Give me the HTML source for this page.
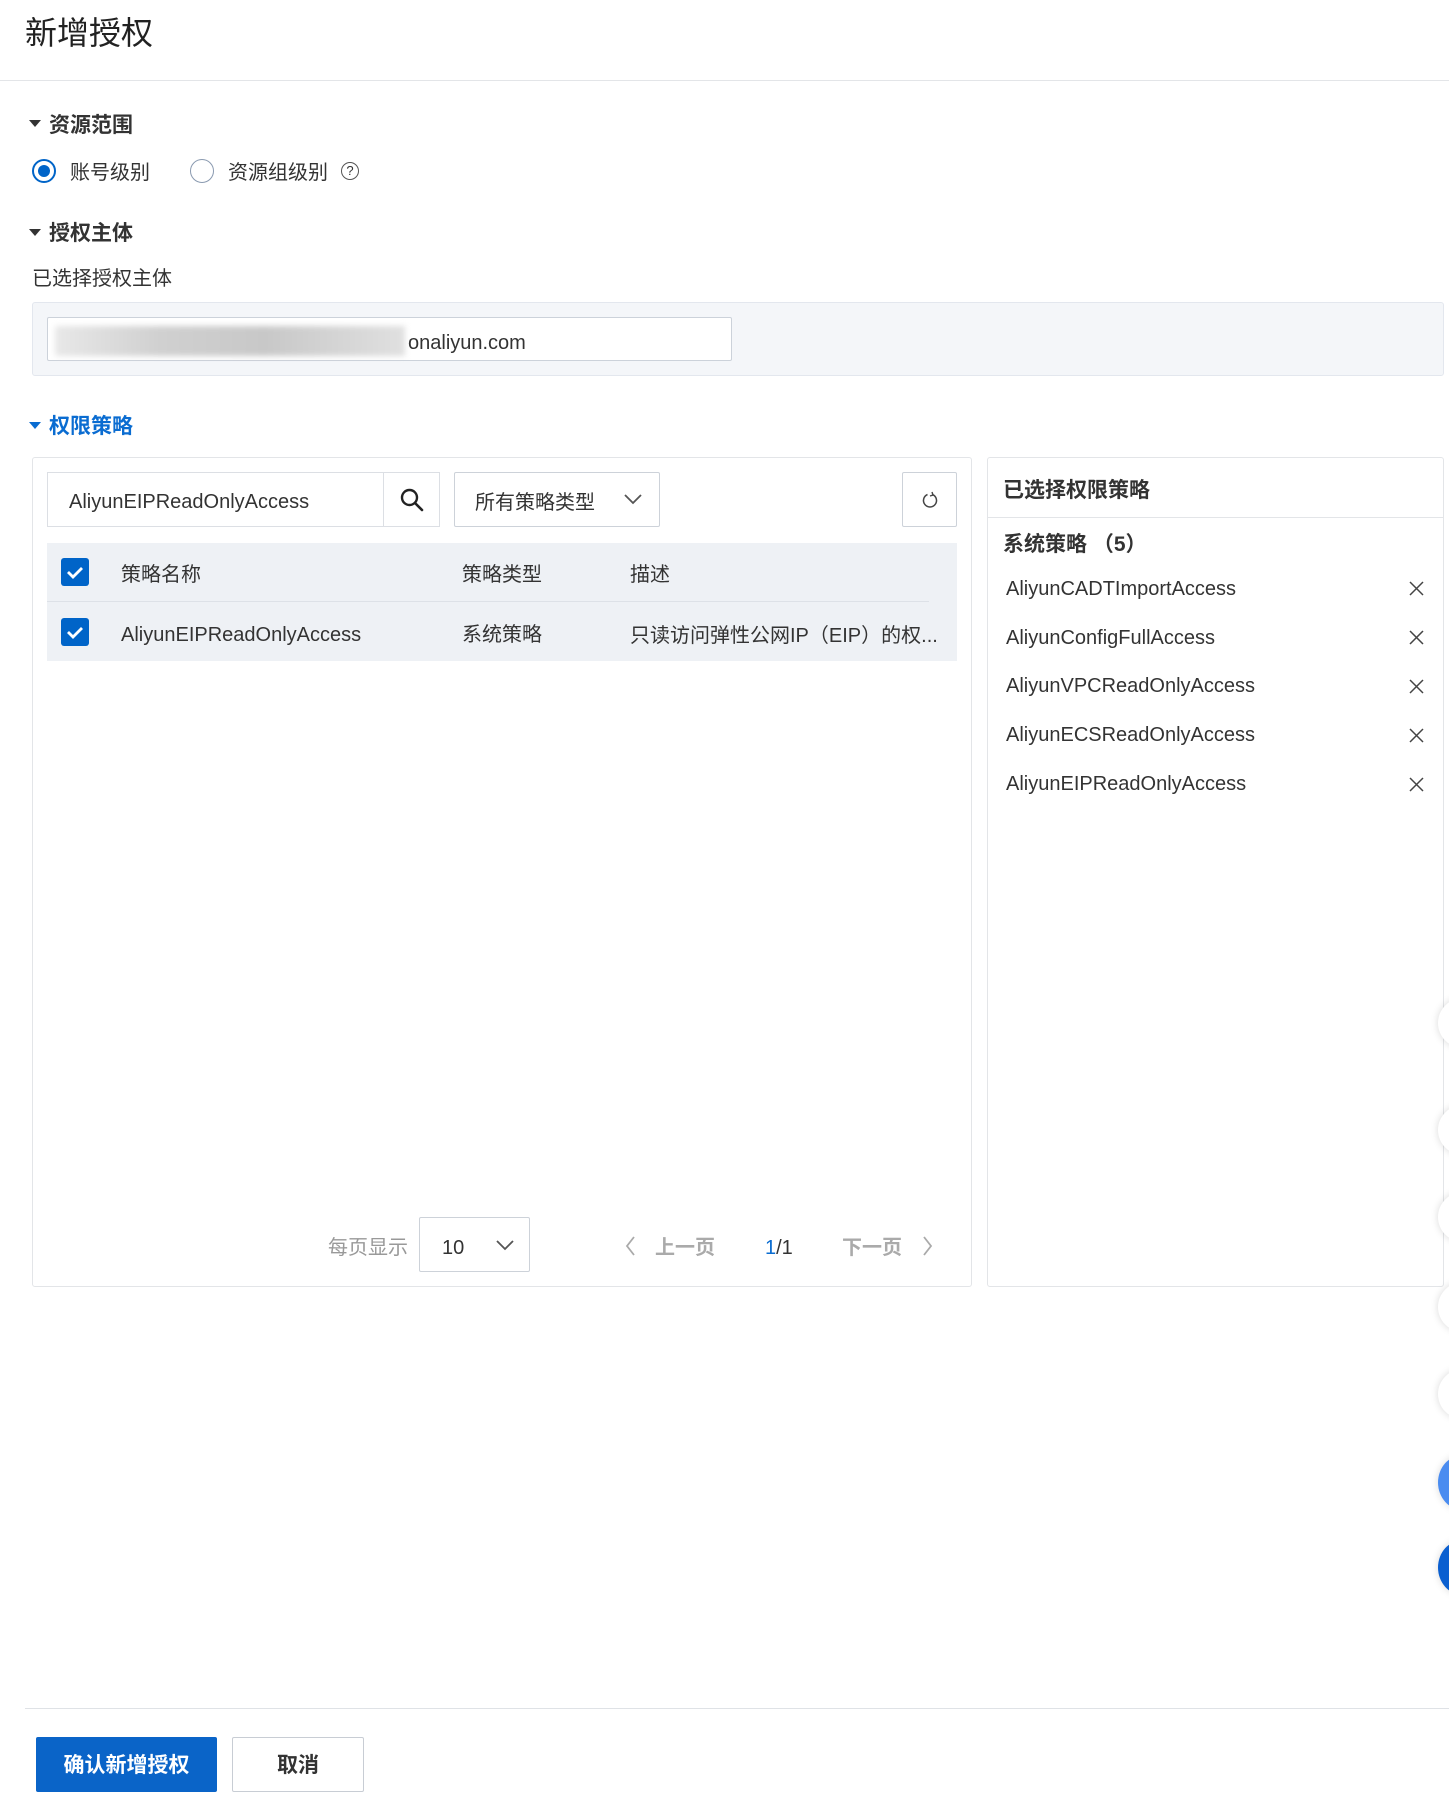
<!DOCTYPE html>
<html><head><meta charset="utf-8"><style>
*{box-sizing:border-box;margin:0;padding:0}
body{width:1449px;height:1802px;background:#fff;font-family:"Liberation Sans","Noto Sans CJK SC",sans-serif;color:#333;position:relative;overflow:hidden;font-size:20px}
.a{position:absolute;white-space:nowrap}
.tri{position:absolute;width:0;height:0;border-left:6px solid transparent;border-right:6px solid transparent;border-top:7px solid #333}
.h{font-weight:bold;font-size:21px;color:#333}
.radio{position:absolute;width:24px;height:24px;border-radius:50%;border:1.5px solid #8a9ab0;background:#fff}
.cb{position:absolute;width:28px;height:28px;background:#0064c8;border-radius:3px}
.circ{position:absolute;border-radius:50%;background:#fff;box-shadow:0 0 8px rgba(0,0,0,.15)}
</style></head><body>
<div class="a" style="left:25px;top:8px;font-size:32px;color:#222">新增授权</div>
<div class="a" style="left:0;top:80px;width:1449px;height:1px;background:#e3e5e8"></div>

<div class="tri" style="left:29px;top:120px"></div>
<div class="a h" style="left:49px;top:109px">资源范围</div>
<div class="radio" style="left:32px;top:159px;border:2px solid #0064c8"><div style="position:absolute;left:4px;top:4px;width:12px;height:12px;border-radius:50%;background:#0064c8"></div></div>
<div class="a" style="left:70px;top:156px">账号级别</div>
<div class="radio" style="left:190px;top:159px"></div>
<div class="a" style="left:228px;top:156px">资源组级别</div>
<div class="a" style="left:341px;top:162px;width:18px;height:18px;border:1.5px solid #555;border-radius:50%;font-size:13px;text-align:center;line-height:15px">?</div>

<div class="tri" style="left:29px;top:229px"></div>
<div class="a h" style="left:49px;top:217px">授权主体</div>
<div class="a" style="left:32px;top:262px">已选择授权主体</div>
<div class="a" style="left:32px;top:302px;width:1412px;height:74px;background:#f4f6f9;border:1px solid #e3e7ee;border-radius:3px"></div>
<div class="a" style="left:47px;top:317px;width:685px;height:44px;background:#fff;border:1px solid #ccd2da;border-radius:2px"></div>
<div class="a" style="left:55px;top:326px;width:350px;height:30px;background:linear-gradient(90deg,#e8e8e8,#d0d0d0 30%,#c8c8c8 60%,#e0e0e0);filter:blur(3px)"></div>
<div class="a" style="left:408px;top:332px">onaliyun.com</div>

<div class="tri" style="left:29px;top:422px;border-top-color:#0a6cd1"></div>
<div class="a h" style="left:49px;top:410px;color:#0a6cd1">权限策略</div>

<div class="a" style="left:32px;top:457px;width:940px;height:830px;border:1px solid #e3e5e8;border-radius:3px"></div>
<div class="a" style="left:987px;top:457px;width:457px;height:830px;border:1px solid #e3e5e8;border-radius:3px"></div>

<div class="a" style="left:47px;top:472px;width:393px;height:55px;border:1px solid #dcdfe4"></div>
<div class="a" style="left:383px;top:472px;width:1px;height:55px;background:#dcdfe4"></div>
<div class="a" style="left:69px;top:491px">AliyunEIPReadOnlyAccess</div>
<svg class="a" style="left:399px;top:487px" width="26" height="26" viewBox="0 0 26 26"><circle cx="10.5" cy="10.5" r="7.5" fill="none" stroke="#222" stroke-width="2.4"/><path d="M16 16l7 7" stroke="#222" stroke-width="2.6" stroke-linecap="round"/></svg>
<div class="a" style="left:454px;top:472px;width:206px;height:55px;border:1px solid #cdd2d9;border-radius:2px"></div>
<div class="a" style="left:475px;top:486px">所有策略类型</div>
<svg class="a" style="left:623px;top:492px" width="20" height="14"><path d="M2 3l8 8 8-8" fill="none" stroke="#555" stroke-width="1.8"/></svg>
<div class="a" style="left:902px;top:472px;width:55px;height:55px;border:1px solid #cdd2d9;border-radius:2px"></div>
<svg class="a" style="left:920px;top:490px" width="20" height="20"><path d="M12.5 4.5A6.5 6.5 0 1 1 7.5 4.5" fill="none" stroke="#444" stroke-width="1.5"/><path d="M12 2l1 3-3 1" fill="none" stroke="#444" stroke-width="1.4"/></svg>

<div class="a" style="left:47px;top:543px;width:910px;height:118px;background:#eef1f5"></div>
<div class="a" style="left:47px;top:601px;width:882px;height:1px;background:#dde1e7"></div>
<div class="cb" style="left:61px;top:558px"><svg width="28" height="28"><path d="M7 14l5 5 9-9" fill="none" stroke="#fff" stroke-width="2.8"/></svg></div>
<div class="cb" style="left:61px;top:618px"><svg width="28" height="28"><path d="M7 14l5 5 9-9" fill="none" stroke="#fff" stroke-width="2.8"/></svg></div>
<div class="a" style="left:121px;top:558px">策略名称</div>
<div class="a" style="left:462px;top:558px">策略类型</div>
<div class="a" style="left:630px;top:558px">描述</div>
<div class="a" style="left:121px;top:624px">AliyunEIPReadOnlyAccess</div>
<div class="a" style="left:462px;top:618px">系统策略</div>
<div class="a" style="left:630px;top:619px">只读访问弹性公网IP（EIP）的权...</div>

<div class="a" style="left:328px;top:1231px;color:#999">每页显示</div>
<div class="a" style="left:419px;top:1217px;width:111px;height:55px;border:1px solid #cdd2d9;border-radius:2px"></div>
<div class="a" style="left:442px;top:1237px">10</div>
<svg class="a" style="left:495px;top:1238px" width="20" height="14"><path d="M2 3l8 8 8-8" fill="none" stroke="#555" stroke-width="1.8"/></svg>
<svg class="a" style="left:624px;top:1235px" width="12" height="22"><path d="M10 2L3 11l7 9" fill="none" stroke="#aaa" stroke-width="1.8"/></svg>
<div class="a" style="left:655px;top:1231px;color:#aaa;font-weight:bold">上一页</div>
<div class="a" style="left:765px;top:1237px"><span style="color:#0a6cd1">1</span>/1</div>
<div class="a" style="left:842px;top:1231px;color:#aaa;font-weight:bold">下一页</div>
<svg class="a" style="left:922px;top:1235px" width="12" height="22"><path d="M2 2l7 9-7 9" fill="none" stroke="#aaa" stroke-width="1.8"/></svg>

<div class="a" style="left:1003px;top:474px;font-weight:bold;font-size:21px">已选择权限策略</div>
<div class="a" style="left:987px;top:517px;width:457px;height:1px;background:#e3e5e8"></div>
<div class="a" style="left:1003px;top:528px;font-weight:bold;font-size:21px">系统策略 （5）</div>
<div class="a" style="left:1006px;top:578px">AliyunCADTImportAccess</div>
<div class="a" style="left:1006px;top:627px">AliyunConfigFullAccess</div>
<div class="a" style="left:1006px;top:675px">AliyunVPCReadOnlyAccess</div>
<div class="a" style="left:1006px;top:724px">AliyunECSReadOnlyAccess</div>
<div class="a" style="left:1006px;top:773px">AliyunEIPReadOnlyAccess</div>
<svg class="a" style="left:1409px;top:581px" width="15" height="15"><path d="M1 1l13 13M14 1L1 14" stroke="#444" stroke-width="1.5"/></svg>
<svg class="a" style="left:1409px;top:630px" width="15" height="15"><path d="M1 1l13 13M14 1L1 14" stroke="#444" stroke-width="1.5"/></svg>
<svg class="a" style="left:1409px;top:679px" width="15" height="15"><path d="M1 1l13 13M14 1L1 14" stroke="#444" stroke-width="1.5"/></svg>
<svg class="a" style="left:1409px;top:728px" width="15" height="15"><path d="M1 1l13 13M14 1L1 14" stroke="#444" stroke-width="1.5"/></svg>
<svg class="a" style="left:1409px;top:777px" width="15" height="15"><path d="M1 1l13 13M14 1L1 14" stroke="#444" stroke-width="1.5"/></svg>

<div class="circ" style="left:1438px;top:998px;width:50px;height:50px"></div>
<div class="circ" style="left:1438px;top:1105px;width:50px;height:50px"></div>
<div class="circ" style="left:1438px;top:1192px;width:50px;height:50px"></div>
<div class="circ" style="left:1438px;top:1282px;width:50px;height:50px"></div>
<div class="circ" style="left:1438px;top:1369px;width:50px;height:50px"></div>
<div class="circ" style="left:1438px;top:1455px;width:50px;height:55px;background:#4a8cf0"></div>
<div class="circ" style="left:1438px;top:1540px;width:50px;height:55px;background:#0a5fd0"></div>

<div class="a" style="left:25px;top:1708px;width:1424px;height:1px;background:#dfe2e6"></div>
<div class="a" style="left:36px;top:1737px;width:181px;height:55px;background:#0a64c8;border-radius:2px;color:#fff;font-weight:bold;font-size:21px;text-align:center;line-height:57px">确认新增授权</div>
<div class="a" style="left:232px;top:1737px;width:132px;height:55px;background:#fff;border:1px solid #c8cdd4;border-radius:2px;font-weight:bold;font-size:21px;text-align:center;line-height:55px">取消</div>
</body></html>
